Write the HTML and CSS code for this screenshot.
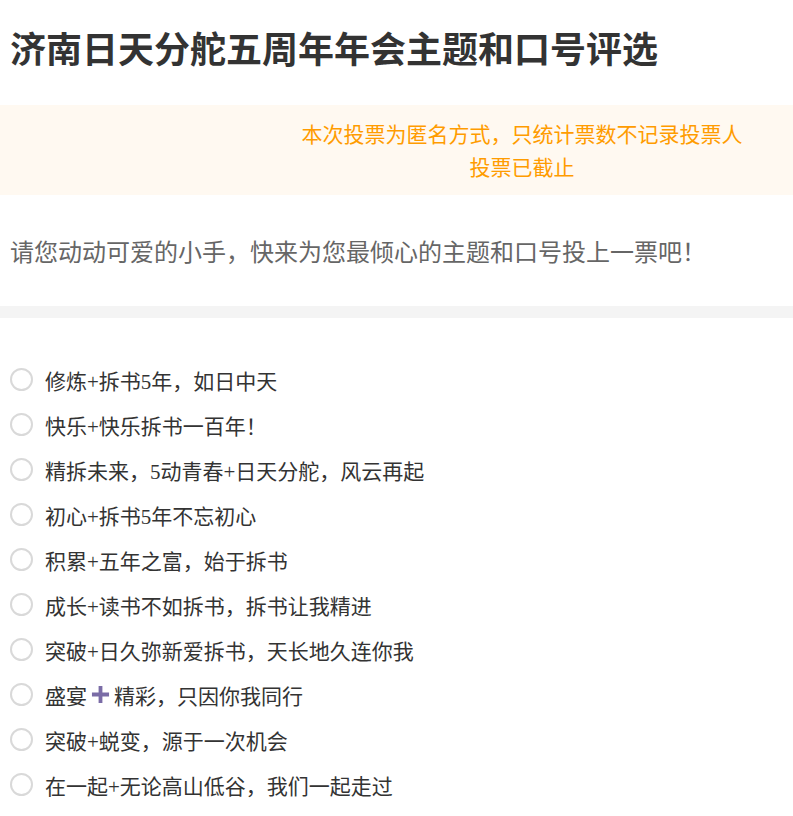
FILE: index.html
```html
<!DOCTYPE html>
<html lang="zh-CN">
<head>
    <meta charset="UTF-8">
    <meta name="viewport" content="width=device-width, initial-scale=1.0">
    <title>年会主题和口号评选</title>
    <link rel="stylesheet" href="styles.css">
</head>
<body>
    <header class="vote-head">
        <h1>济南日天分舵五周年年会主题和口号评选</h1>
    </header>
    <div class="notice">
        <p>本次投票为匿名方式，只统计票数不记录投票人</p>
        <p>投票已截止</p>
    </div>
    <div class="intro">
        <p>请您动动可爱的小手，快来为您最倾心的主题和口号投上一票吧！</p>
    </div>
    <div class="divider"></div>
    <ul class="options">
        <li><span class="radio"></span>修炼+拆书5年，如日中天</li>
        <li><span class="radio"></span>快乐+快乐拆书一百年！</li>
        <li><span class="radio"></span>精拆未来，5动青春+日天分舵，风云再起</li>
        <li><span class="radio"></span>初心+拆书5年不忘初心</li>
        <li><span class="radio"></span>积累+五年之富，始于拆书</li>
        <li><span class="radio"></span>成长+读书不如拆书，拆书让我精进</li>
        <li><span class="radio"></span>突破+日久弥新爱拆书，天长地久连你我</li>
        <li><span class="radio"></span>盛宴<svg class="plus" viewBox="0 0 20 20" aria-hidden="true"><path d="M8 1h4v7h7v4h-7v7H8v-7H1V8h7z"/></svg>精彩，只因你我同行</li>
        <li><span class="radio"></span>突破+蜕变，源于一次机会</li>
        <li><span class="radio"></span>在一起+无论高山低谷，我们一起走过</li>
    </ul>
</body>
</html>
```
FILE: styles.css
```css
/* reset */
* {box-sizing: border-box;}
body, h1, p, ul {margin: 0; padding: 0;}
li {list-style: none;}
body {background: #fff; color: #333;
    font-family: "Noto Sans CJK SC", "Liberation Sans", sans-serif;}

/* title */
.vote-head {padding: 24px 10px 0; height: 105px;}
.vote-head h1 {font-size: 36px; line-height: 46px; font-weight: bold; color: #333;}

/* notice */
.notice {height: 90px; padding: 12px 0 12px 251px;
    background: #fff9f1; color: #ff9c00;
    font-size: 21px; line-height: 33px; text-align: center;}

/* intro */
.intro {height: 111px; padding: 40px 10px 0;}
.intro p {font-size: 24px; line-height: 32px; color: #666;}

.divider {height: 12px; background: #f4f4f4;}

/* options */
.options {padding-top: 39px;
    font-family: "Liberation Serif", "Noto Sans CJK SC", serif;
    font-size: 21px; color: #333;}
.options li {display: flex; align-items: center; height: 45px;}
.radio {width: 23px; height: 23px; margin: 0 12px 0 10px;
    border: 2px solid #d9d9d9; border-radius: 50%; flex-shrink: 0;}
.plus {width: 19px; height: 19px; margin: 0 4px; fill: #7a6ca6;}
```
